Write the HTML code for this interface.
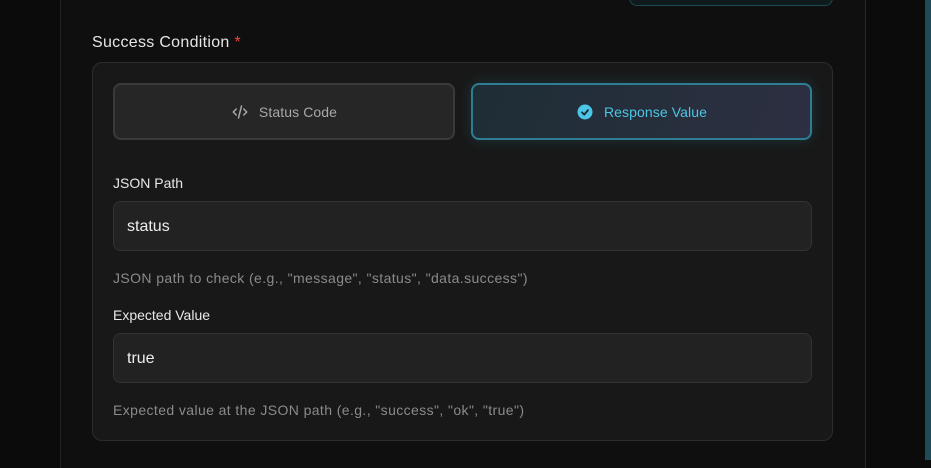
<!DOCTYPE html>
<html><head><meta charset="utf-8"><style>
*{box-sizing:border-box;margin:0;padding:0}
body{width:931px;height:460px;overflow:hidden;background:#0b0b0b;font-family:"Liberation Sans",sans-serif;position:relative}
.panel{position:absolute;left:60px;top:-2px;width:806px;height:470px;background:#0f0f0f;border-left:1px solid #222;border-right:1px solid #2a2a2a}
.strip{position:absolute;left:925px;top:0;width:6px;height:460px;background:#1f4b57}
.topbox{position:absolute;left:629px;top:-20px;width:204px;height:26px;border:1px solid #1e4a52;border-radius:8px;background:#0f1a1c}
.lbl{position:absolute;left:92px;top:34px;font-size:16px;letter-spacing:0.3px;color:#e6e6e6}
.lbl span{color:#ef4444}
.card{position:absolute;left:92px;top:62px;width:741px;height:379px;background:#181818;border:1px solid #2c2c2c;border-radius:10px}
.btn{position:absolute;top:83px;height:57px;border-radius:8px;display:flex;align-items:center;justify-content:center;font-size:14px;gap:10px;letter-spacing:0.1px}
.b1{left:113px;width:342px;background:#262626;border:2px solid #3a3a3a;color:#a8a8a8}
.b2{left:471px;width:341px;background:linear-gradient(110deg,#1e2e35,#2d2f42);border:2px solid #2f7d92;color:#4cc6e6;box-shadow:0 0 14px rgba(56,170,200,.2)}
.fl{position:absolute;left:113px;font-size:14px;color:#e8e8e8}
.inp{position:absolute;left:113px;width:699px;height:50px;background:#222;border:1px solid #333;border-radius:8px;font-size:16px;color:#eee;padding-left:13px;display:flex;align-items:center;padding-top:2px}
.help{position:absolute;left:113px;font-size:14px;color:#8a8a8a;letter-spacing:0.4px}
</style></head><body>
<div class="panel"></div>
<div class="strip"></div>
<div class="topbox"></div>
<div class="lbl">Success Condition <span>*</span></div>
<div class="card"></div>
<div class="btn b1"><svg width="18" height="18" viewBox="0 0 24 24" fill="none" stroke="#a8a8a8" stroke-width="2" stroke-linecap="round" stroke-linejoin="round"><path d="M7 8l-4 4 4 4M17 8l4 4-4 4M14 4l-4 16"/></svg>Status Code</div>
<div class="btn b2"><svg width="18" height="18" viewBox="0 0 24 24"><circle cx="12" cy="12" r="10" fill="#4cc6e6"/><path d="M8 12.5l3 3 5-6" fill="none" stroke="#1a2a33" stroke-width="2.4" stroke-linecap="round" stroke-linejoin="round"/></svg>Response Value</div>
<div class="fl" style="top:175px">JSON Path</div>
<div class="inp" style="top:201px">status</div>
<div class="help" style="top:270px">JSON path to check (e.g., "message", "status", "data.success")</div>
<div class="fl" style="top:307px">Expected Value</div>
<div class="inp" style="top:333px">true</div>
<div class="help" style="top:402px">Expected value at the JSON path (e.g., "success", "ok", "true")</div>
</body></html>
